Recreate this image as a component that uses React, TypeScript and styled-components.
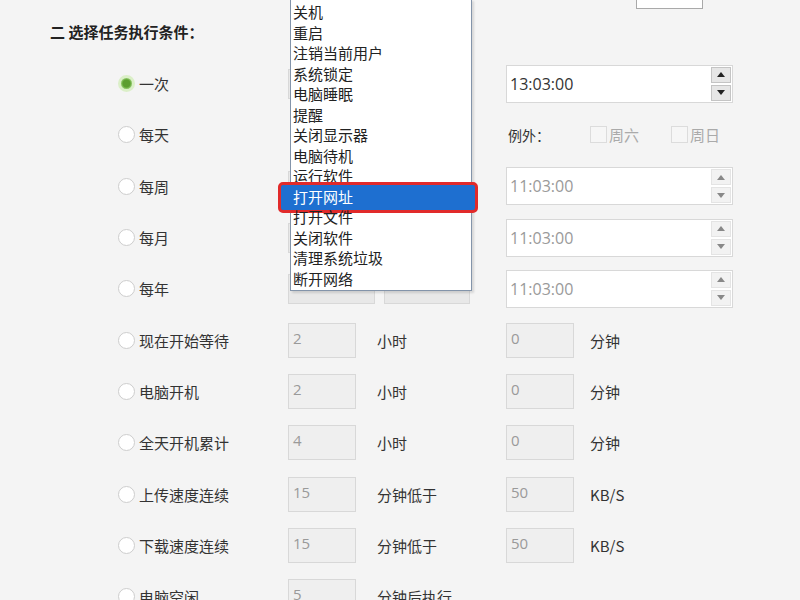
import React from 'react';
import styled, { createGlobalStyle, css } from 'styled-components';

const GlobalStyle = createGlobalStyle`
	html, body {
		margin: 0;
		padding: 0;
		background: #f4f4f4;
		overflow: hidden;
	}
	body {
		font-family: "Noto Sans CJK SC", "Noto Sans", sans-serif;
		color: #333;
	}
`;

const taskTypes = [
	'关机',
	'重启',
	'注销当前用户',
	'系统锁定',
	'电脑睡眠',
	'提醒',
	'关闭显示器',
	'电脑待机',
	'运行软件',
	'打开网址',
	'打开文件',
	'关闭软件',
	'清理系统垃圾',
	'断开网络',
];

interface Cond {
	label: string;
	kind: 'once' | 'daily' | 'date' | 'count';
	checked?: boolean;
	time?: string;
	a?: string;
	unitA?: string;
	b?: string;
	unitB?: string;
}

const conditions: Cond[] = [
	{ label: '一次', kind: 'once', checked: true, time: '13:03:00' },
	{ label: '每天', kind: 'daily' },
	{ label: '每周', kind: 'date', time: '11:03:00' },
	{ label: '每月', kind: 'date', time: '11:03:00' },
	{ label: '每年', kind: 'date', time: '11:03:00' },
	{ label: '现在开始等待', kind: 'count', a: '2', unitA: '小时', b: '0', unitB: '分钟' },
	{ label: '电脑开机', kind: 'count', a: '2', unitA: '小时', b: '0', unitB: '分钟' },
	{ label: '全天开机累计', kind: 'count', a: '4', unitA: '小时', b: '0', unitB: '分钟' },
	{ label: '上传速度连续', kind: 'count', a: '15', unitA: '分钟低于', b: '50', unitB: 'KB/S' },
	{ label: '下载速度连续', kind: 'count', a: '15', unitA: '分钟低于', b: '50', unitB: 'KB/S' },
	{ label: '电脑空闲', kind: 'count', a: '5', unitA: '分钟后执行' },
];

const App = () => {
	return (
		<Page>
			<GlobalStyle />
			<TopBar>
				<TopBox />
			</TopBar>
			<Title>二 选择任务执行条件：</Title>

			<List>
				{conditions.map((c) => (
					<Row key={c.label}>
						<RadioLabel>
							<Radio checked={!!c.checked} />
							{c.label}
						</RadioLabel>

						{c.kind === 'count' && (
							<>
								<NumBox>{c.a}</NumBox>
								<Unit>{c.unitA}</Unit>
								{c.b && <NumBox>{c.b}</NumBox>}
								{c.unitB && <Unit>{c.unitB}</Unit>}
							</>
						)}

						{(c.kind === 'once' || c.kind === 'date') && (
							<>
								<SelectPair>
									<PlainSelect />
									<PlainSelect />
								</SelectPair>
								<TimeInput disabled={c.kind !== 'once'}>
									<span>{c.time}</span>
									<Spinner>
										<SpinBtn disabled={c.kind !== 'once'} up />
										<SpinBtn disabled={c.kind !== 'once'} />
									</Spinner>
								</TimeInput>
							</>
						)}

						{c.kind === 'daily' && (
							<Except>
								<ExceptLabel>例外：</ExceptLabel>
								<Check>
									<CheckBox />
									周六
								</Check>
								<Check>
									<CheckBox />
									周日
								</Check>
							</Except>
						)}
					</Row>
				))}
			</List>

			<Dropdown>
				{taskTypes.map((t) => (
					<Option key={t} active={t === '打开网址'}>
						<span>{t}</span>
					</Option>
				))}
			</Dropdown>
		</Page>
	);
};

const Page = styled.div`
	position: relative;
	width: 800px;
	height: 600px;
	overflow: hidden;
	background: #f4f4f4;
`;

const TopBar = styled.div`
	display: flex;
	justify-content: flex-end;
	padding-right: 97px;
	margin-top: -30px;
`;

const TopBox = styled.div`
	width: 65px;
	height: 37px;
	background: #fff;
	border: 1px solid #a9a9a9;
`;

const Title = styled.div`
	margin: 13px 0 0 50px;
	font-size: 15px;
	font-weight: 700;
	color: #222;
	line-height: 20px;
`;

const List = styled.div`
	display: flex;
	flex-direction: column;
	margin-top: 16px;
	padding-left: 118px;
`;

const Row = styled.div`
	display: grid;
	grid-template-columns: 170px 89px 129px 84px auto;
	align-items: center;
	height: 51.3px;
`;

const RadioLabel = styled.label`
	display: flex;
	align-items: center;
	gap: 4px;
	font-size: 15px;
	color: #333;
`;

const Radio = styled.span<{ checked: boolean }>`
	box-sizing: border-box;
	width: 17px;
	height: 17px;
	border-radius: 50%;
	background: #fff;
	border: 1px solid #cdcdcd;
	flex-shrink: 0;
	${(p) =>
		p.checked &&
		css`
			border: 3px solid #dbefc8;
			background: radial-gradient(circle, #5c9e30 0 3.5px, #86c25e 5px);
		`}
`;

const fieldBox = css`
	box-sizing: border-box;
	border: 1px solid #d8d8d8;
`;

const NumBox = styled.div`
	${fieldBox};
	width: 68px;
	height: 35px;
	background: #efefef;
	color: #9a9a9a;
	font-family: "Open Sans", "Noto Sans", sans-serif;
	font-size: 15px;
	padding: 4px 0 0 4px;
`;

const Unit = styled.div`
	font-size: 15px;
	color: #333;
	font-family: "Noto Sans CJK SC", "Noto Sans", sans-serif;
`;

const SelectPair = styled.div`
	grid-column: 2 / 4;
	display: flex;
	gap: 9px;
	width: 182px;
	height: 30px;
`;

const PlainSelect = styled.div`
	${fieldBox};
	flex: 1;
	background: #e8e8e8;
`;

const TimeInput = styled.div<{ disabled: boolean }>`
	${fieldBox};
	grid-column: 4 / 6;
	width: 227px;
	height: 38px;
	background: #fff;
	display: flex;
	align-items: center;
	justify-content: space-between;
	padding: 0 1px 0 3px;
	font-family: "Open Sans", "Noto Sans", sans-serif;
	font-size: 16px;
	color: ${(p) => (p.disabled ? '#9a9a9a' : '#333')};
`;

const Spinner = styled.div`
	display: flex;
	flex-direction: column;
	gap: 2px;
`;

const SpinBtn = styled.div<{ disabled: boolean; up?: boolean }>`
	box-sizing: border-box;
	width: 20px;
	height: 16px;
	background: ${(p) => (p.disabled ? '#f2f2f2' : '#e6e6e6')};
	border: 1px solid ${(p) => (p.disabled ? '#e4e4e4' : '#c4c4c4')};
	display: flex;
	align-items: center;
	justify-content: center;
	&::after {
		content: '';
		border-left: 4px solid transparent;
		border-right: 4px solid transparent;
		${(p) =>
			p.up
				? css`border-bottom: 5px solid ${p.disabled ? '#888' : '#222'};`
				: css`border-top: 5px solid ${p.disabled ? '#888' : '#222'};`}
	}
`;

const Except = styled.div`
	grid-column: 4 / 6;
	display: flex;
	align-items: center;
	padding-left: 2px;
`;

const ExceptLabel = styled.span`
	width: 82px;
	font-size: 14px;
	color: #333;
`;

const Check = styled.label`
	display: flex;
	align-items: center;
	gap: 2px;
	width: 81px;
	font-size: 15px;
	color: #aaa;
`;

const CheckBox = styled.span`
	box-sizing: border-box;
	width: 17px;
	height: 17px;
	border: 1px solid #dcdcdc;
	background: #f6f6f6;
`;

const Dropdown = styled.div`
	position: absolute;
	left: 290px;
	top: -1px;
	width: 182px;
	box-sizing: border-box;
	padding: 2px 0 1px;
	background: #fff;
	border: 1px solid #8394aa;
	box-shadow: 2px 2px 2px rgba(0, 0, 0, 0.12);
`;

const Option = styled.div<{ active: boolean }>`
	position: relative;
	height: 20.5px;
	line-height: 20.5px;
	padding-left: 2px;
	font-size: 15px;
	color: #222;
	white-space: nowrap;
	span {
		position: relative;
	}
	${(p) =>
		p.active &&
		css`
			color: #fff;
			&::before {
				content: '';
				position: absolute;
				top: -5px;
				bottom: -6px;
				left: -13px;
				right: -7px;
				background: #1e6fd0;
				border: 3px solid #e12a2a;
				border-radius: 5px;
			}
		`}
`;

export default App;
